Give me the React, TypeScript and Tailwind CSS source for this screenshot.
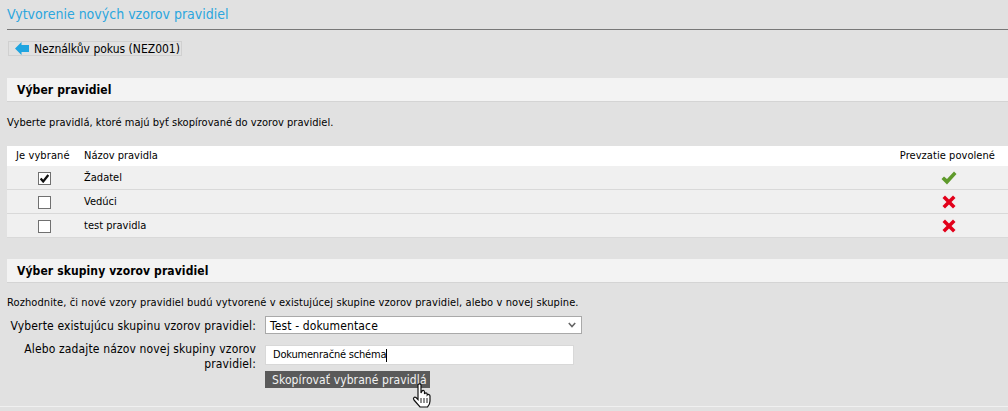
import React from "react";

const Check = () => (
  <svg width="16" height="14" viewBox="0 0 16 14"><path d="M0.5 8 L3 5.5 L6 8 L13 0.5 L15.5 3 L6 13.5 Z" fill="#5f9a2c" /></svg>
);
const Cross = () => (
  <svg width="14" height="14" viewBox="0 0 14 14"><path d="M0.5 3 L3 0.5 L7 4.5 L11 0.5 L13.5 3 L9.5 7 L13.5 11 L11 13.5 L7 9.5 L3 13.5 L0.5 11 L4.5 7 Z" fill="#e2001a" /></svg>
);
const Box = ({ checked }: { checked?: boolean }) => (
  <span className="flex h-[13px] w-[13px] items-center justify-center border border-[#707070] bg-white">
    {checked && (
      <svg width="9" height="9" viewBox="0 0 9 9"><path d="M0.7 4.5 L3.2 7.5 L8.3 1" fill="none" stroke="#111" strokeWidth="2.2" /></svg>
    )}
  </span>
);
const Row = ({ name, checked, ok }: { name: string; checked?: boolean; ok?: boolean }) => (
  <div className="flex h-6 items-center border-b border-[#d9d9d9] bg-[#f0f0f0] pt-[1px]">
    <div className="flex w-[77px] justify-center pr-[2px]"><Box checked={checked} /></div>
    <div className="flex-1">{name}</div>
    <div className="flex w-[100px] justify-center pr-[18px]">{ok ? <Check /> : <Cross />}</div>
  </div>
);
const Section = ({ title }: { title: string }) => (
  <div className="flex h-6 items-center border-b border-[#d4d4d4] bg-[#f3f3f3] pl-[10px] text-[12px] font-bold tracking-[0.1px]">{title}</div>
);

export default function App() {
  return (
    <div className="h-[411px] overflow-hidden bg-[#e1e1e1] pl-[7px] text-[11px] text-black [font-family:'DejaVu_Sans',sans-serif] [font-stretch:condensed]">
      <div className="flex h-[30px] items-center border-b border-[#777] text-[14px] text-[#2ba6de]">Vytvorenie nových vzorov pravidiel</div>
      <div className="mt-[11px] ml-[1px] flex h-[15px] w-[174px] items-center gap-[5px] border border-[#d0d0d0] pl-[6px] text-[12px]">
        <svg width="14" height="13" viewBox="0 0 14 13"><path d="M0 6.5 L6.5 0 V3 H14 V10 H6.5 V13 Z" fill="#1fa5e0" /></svg>
        <span>Neználkův pokus (NEZ001)</span>
      </div>
      <div className="mt-[22px]"><Section title="Výber pravidiel" /></div>
      <p className="mt-[13px] h-[16px] leading-[16px] tracking-[0.03px]">Vyberte pravidlá, ktoré majú byť skopírované do vzorov pravidiel.</p>
      <div className="mt-[15px]">
        <div className="flex h-5 items-center bg-white">
          <div className="w-[77px] pl-[9px] tracking-[0.1px]">Je vybrané</div>
          <div className="flex-1">Názov pravidla</div>
          <div className="pr-[13px] tracking-[0.06px]">Prevzatie povolené</div>
        </div>
        <Row name="Žadatel" checked ok />
        <Row name="Vedúci" />
        <Row name="test pravidla" />
      </div>
      <div className="mt-[21px]"><Section title="Výber skupiny vzorov pravidiel" /></div>
      <p className="mt-[12px] h-[16px] leading-[16px] tracking-[0.1px]">Rozhodnite, či nové vzory pravidiel budú vytvorené v existujúcej skupine vzorov pravidiel, alebo v novej skupine.</p>
      <div className="mt-[5px] flex items-center text-[12px] tracking-[0.14px]">
        <div className="w-[249px] pt-[2px] text-right leading-[16px]">Vyberte existujúcu skupinu vzorov pravidiel:</div>
        <div className="ml-[9px] flex h-[18px] w-[317px] items-center justify-between border border-[#a9a9a9] bg-white pr-[5px] pl-[4px] leading-[16px]">
          <span className="pt-[1px]">Test - dokumentace</span>
          <svg width="8" height="6" viewBox="0 0 8 6"><path d="M0.8 1 L4 4.5 L7.2 1" fill="none" stroke="#666" strokeWidth="1.6" /></svg>
        </div>
      </div>
      <div className="mt-[8px] flex items-start text-[12px] tracking-[0.14px]">
        <div className="w-[249px] text-right leading-[15px]">Alebo zadajte názov novej skupiny vzorov pravidiel:</div>
        <div className="ml-[9px]">
          <div className="mt-[3px] flex h-5 w-[309px] items-center border border-[#d8d8d8] bg-white pl-[7px] text-[11px] tracking-[-0.2px]">
            <span>Dokumenračné schéma</span><span className="h-[13px] w-px bg-black" />
          </div>
          <div className="relative mt-[6px] flex h-[17px] w-[165px] items-center bg-[#5a5a5a] pl-[7px] text-[12px] tracking-[0.1px] text-[#f2f2f2]">
            Skopírovať vybrané pravidlá
            <svg className="absolute left-[147px] top-[12px]" width="20" height="25" viewBox="0 0 20 25">
              <path d="M6 2 C6 0.5 9 0.5 9 2 V10 L10 8 C11 7 12.5 7.5 12.5 9 V11 C13 9.5 15 9.5 15.2 11 V12 C16 11 18 11.5 18 13 V18 C18 21 17 22.5 15.5 24 H8 L2 17 C0.5 15 2.5 13.5 4 14.5 L6 16.5 Z" fill="#fff" stroke="#111" strokeWidth="1.2" />
              <path d="M9 15 V20 M12 15 V20 M15 15 V20" stroke="#222" strokeWidth="1" />
            </svg>
          </div>
        </div>
      </div>
      <div className="mt-[18px] -ml-[7px] border-t border-[#f0f0f0]" />
    </div>
  );
}
